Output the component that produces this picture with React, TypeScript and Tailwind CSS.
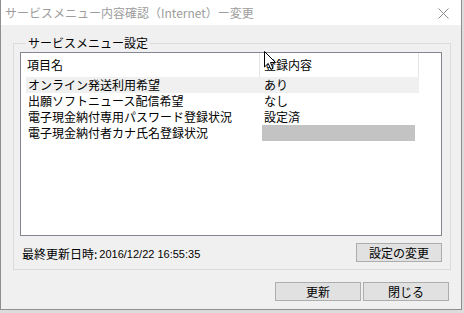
import React from 'react'

const jp = { fontFamily: '"Noto Sans CJK JP", "Noto Sans", sans-serif' }

const rows = [
  { name: 'オンライン発送利用希望', value: 'あり', selected: true },
  { name: '出願ソフトニュース配信希望', value: 'なし' },
  { name: '電子現金納付専用パスワード登録状況', value: '設定済' },
  { name: '電子現金納付者カナ氏名登録状況', value: '', blank: true },
]

function Button({ label, className = '' }: { label: string; className?: string }) {
  return (
    <div
      className={`h-[19px] w-[86px] bg-[#e1e1e1] border border-[#adadad] flex items-center justify-center text-[12px] leading-none text-black ${className}`}
    >
      {label}
    </div>
  )
}

export default function App() {
  return (
    <div className="relative w-[464px] h-[313px] bg-[#dcdcdc] overflow-hidden" style={jp}>
      <div className="w-[462px] h-[310px] bg-[#f0f0f0] border-x border-b border-[#8f8f8f] flex flex-col">
        {/* title bar */}
        <div className="h-[25px] bg-white flex items-center justify-between pl-[4px] pr-[12px] shrink-0">
          <span className="text-[12px] text-[#9c9c9c] leading-none">サービスメニュー内容確認（Internet）ー変更</span>
          <svg width="11" height="11" viewBox="0 0 11 11" className="mt-[1px]">
            <path d="M0.5 0.5 L10.5 10.5 M10.5 0.5 L0.5 10.5" stroke="#8a8a8a" strokeWidth="1" />
          </svg>
        </div>

        <div className="flex flex-col pl-[12px] pr-[11px] pt-[11px]">
          <fieldset className="w-[438px] border border-[#dcdcdc] pl-[6px] pr-[8px] pb-[6px]">
            <legend className="ml-[6px] px-[2px] text-[12px] leading-[14px] text-black">サービスメニュー設定</legend>

            <div className="mt-[2px] w-[422px] h-[184px] bg-white border border-[#828790] flex flex-col">
              <div className="h-[24px] flex text-[12px] text-black shrink-0">
                <div className="w-[239px] border-r border-[#e5e5e5] pl-[6px] flex items-center">項目名</div>
                <div className="w-[159px] border-r border-[#e5e5e5] pl-[4px] flex items-center">登録内容</div>
              </div>
              {rows.map((r) => (
                <div
                  key={r.name}
                  className={`ml-[5px] w-[393px] h-[16px] flex text-[12px] leading-[16px] text-black ${r.selected ? 'bg-[#f0f0f0]' : ''}`}
                >
                  <div className="w-[234px] pl-[2px] whitespace-nowrap">{r.name}</div>
                  <div className="flex-1 pl-[4px]">
                    {r.blank ? <div className="ml-[-2px] w-[153px] h-[16px] bg-[#c3c3c3]" /> : r.value}
                  </div>
                </div>
              ))}
            </div>

            <div className="mt-[6px] flex items-center justify-between pl-[2px]">
              <div className="flex items-center text-[12px] text-black mt-[3px]">
                <span>最終更新日時:</span>
                <span className="ml-[2px] text-[11px]" style={{ fontFamily: '"Liberation Sans", Arial, sans-serif' }}>
                  2016/12/22 16:55:35
                </span>
              </div>
              <Button label="設定の変更" />
            </div>
          </fieldset>

          <div className="mt-[12px] flex justify-end gap-[2px] pr-[1px]">
            <Button label="更新" />
            <Button label="閉じる" />
          </div>
        </div>
      </div>

      {/* mouse cursor */}
      <svg className="absolute left-[264px] top-[51px]" width="13" height="20" viewBox="0 0 13 20">
        <path d="M0.5 0.5 L0.5 16 L4.2 12.4 L6.8 18.3 L9 17.3 L6.5 11.5 L11.5 11.5 Z" fill="white" stroke="black" strokeWidth="1" />
      </svg>
    </div>
  )
}
